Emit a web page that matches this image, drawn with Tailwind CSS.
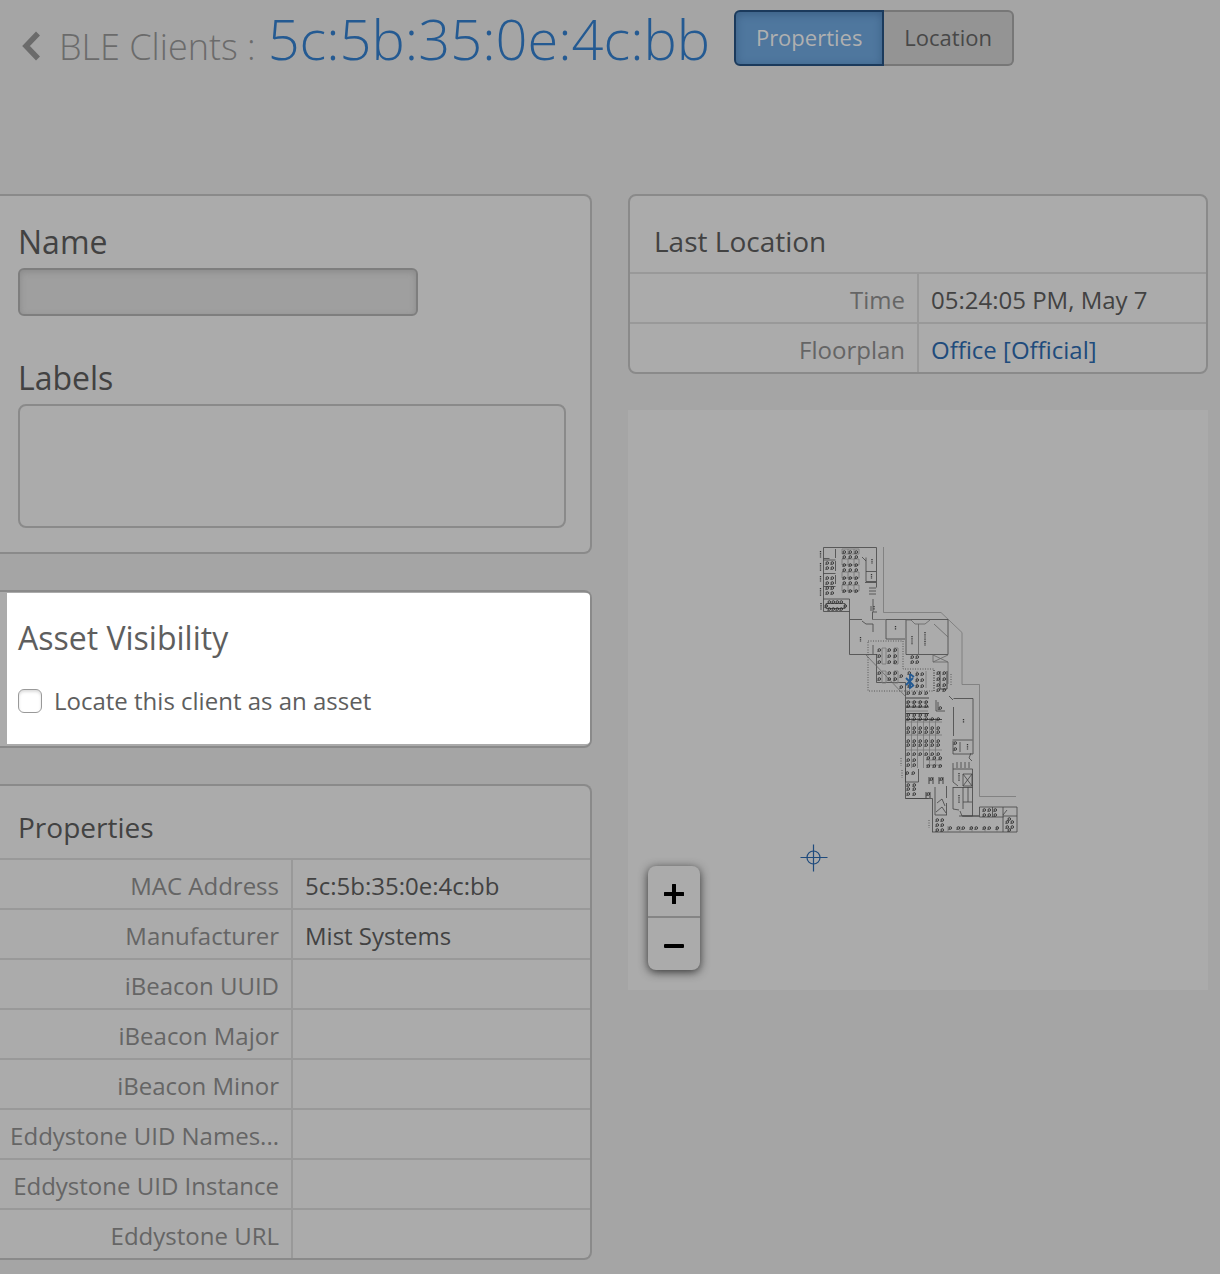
<!DOCTYPE html>
<html lang="en">
<head>
  <meta charset="UTF-8">
  <title>BLE Clients</title>
  <meta name="viewport" content="width=device-width, initial-scale=1.0">
  <script src="https://cdn.jsdelivr.net/npm/@tailwindcss/browser@4"></script>
</head>
<body class="min-h-screen bg-[#a5a5a5] font-['Open_Sans',sans-serif] text-2xl text-[#424242]">

  <header class="flex items-start pl-[22px] pt-[10px] h-[194px]">
    <a href="#" aria-label="Back" class="mt-[21px] mr-[18px]">
      <svg class="w-[19px] h-[30px]" viewBox="0 0 19 30" fill="none" stroke="#6b6b6b" stroke-width="5.5">
        <path d="M16 2.5 4 15l12 12.500"/>
      </svg>
    </a>
    <h1 class="flex items-baseline gap-3 -mt-3 font-light leading-[80px] whitespace-nowrap">
      <span class="text-[36px] text-[#6b6b6b]">BLE Clients :</span>
      <span class="text-[56px] text-[#245a92]">5c:5b:35:0e:4c:bb</span>
    </h1>
    <div class="flex ml-6 text-[22px] h-14">
      <button type="button" class="w-[150px] rounded-l-md border-2 border-[#1b3a5c] bg-[#4f779e] text-[#b0b0b0] shadow-[inset_0_2px_8px_#3b5f84]">Properties</button>
      <button type="button" class="w-[130px] rounded-r-md border-2 border-l-0 border-[#777] bg-[#949494] text-[#484848]">Location</button>
    </div>
  </header>

  <main class="grid grid-cols-[592fr_580fr] items-start gap-9 pr-3 pb-3">

    <div class="flex flex-col gap-9">
      <section class="rounded-r-lg border-2 border-l-0 border-[#8a8a8a] bg-[#ababab] pl-[18px] pr-6 py-6">
        <label for="name" class="block text-[32px] leading-[44px] mb-1">Name</label>
        <input id="name" type="text" class="block w-[400px] h-12 px-3 rounded-md border-2 border-[#7e7e7e] bg-[#9f9f9f] shadow-[inset_0_2px_6px_#8a8a8a]">
        <label for="labels" class="block text-[32px] leading-[44px] mb-1 mt-10">Labels</label>
        <textarea id="labels" class="block w-full h-[124px] px-3 resize-none rounded-lg border-2 border-[#8a8a8a] bg-[#ababab]"></textarea>
      </section>

      <section class="rounded-r-lg border-2 border-l-0 border-[#8a8a8a] bg-[#ababab] pl-[7px] pt-px pb-0.5">
        <div class="h-[151px] rounded-r bg-white pl-[11px] pt-[23px] text-[#5e5e5e]">
          <h2 class="text-[32px] leading-[44px]">Asset Visibility</h2>
          <label class="flex items-center gap-3 mt-[25px] leading-8">
            <input type="checkbox" class="appearance-none w-6 h-6 rounded-md border border-[#999] bg-white shadow-[inset_0_2px_3px_#ddd]">
            Locate this client as an asset
          </label>
        </div>
      </section>

      <section class="rounded-r-lg border-2 border-l-0 border-[#8a8a8a] bg-[#ababab]">
        <h2 class="h-[72px] pl-[18px] pt-[21px] text-[28px] leading-10">Properties</h2>
        <table class="w-full table-fixed border-separate border-spacing-0 leading-8">
          <tbody>
            <tr class="h-[50px]">
              <th scope="row" class="w-[293px] border-t-2 border-r-2 border-[#999] pr-3 pt-1 text-right font-normal text-[#656565] truncate">MAC Address</th>
              <td class="border-t-2 border-[#999] pl-3 pt-1">5c:5b:35:0e:4c:bb</td>
            </tr>
            <tr class="h-[50px]">
              <th scope="row" class="border-t-2 border-r-2 border-[#999] pr-3 pt-1 text-right font-normal text-[#656565] truncate">Manufacturer</th>
              <td class="border-t-2 border-[#999] pl-3 pt-1">Mist Systems</td>
            </tr>
            <tr class="h-[50px]">
              <th scope="row" class="border-t-2 border-r-2 border-[#999] pr-3 pt-1 text-right font-normal text-[#656565] truncate">iBeacon UUID</th>
              <td class="border-t-2 border-[#999] pl-3 pt-1"></td>
            </tr>
            <tr class="h-[50px]">
              <th scope="row" class="border-t-2 border-r-2 border-[#999] pr-3 pt-1 text-right font-normal text-[#656565] truncate">iBeacon Major</th>
              <td class="border-t-2 border-[#999] pl-3 pt-1"></td>
            </tr>
            <tr class="h-[50px]">
              <th scope="row" class="border-t-2 border-r-2 border-[#999] pr-3 pt-1 text-right font-normal text-[#656565] truncate">iBeacon Minor</th>
              <td class="border-t-2 border-[#999] pl-3 pt-1"></td>
            </tr>
            <tr class="h-[50px]">
              <th scope="row" class="border-t-2 border-r-2 border-[#999] pr-3 pt-1 text-right font-normal text-[#656565] truncate">Eddystone UID Names...</th>
              <td class="border-t-2 border-[#999] pl-3 pt-1"></td>
            </tr>
            <tr class="h-[50px]">
              <th scope="row" class="border-t-2 border-r-2 border-[#999] pr-3 pt-1 text-right font-normal text-[#656565] truncate">Eddystone UID Instance</th>
              <td class="border-t-2 border-[#999] pl-3 pt-1"></td>
            </tr>
            <tr class="h-[50px]">
              <th scope="row" class="border-t-2 border-r-2 border-[#999] pr-3 pt-1 text-right font-normal text-[#656565] truncate">Eddystone URL</th>
              <td class="border-t-2 border-[#999] pl-3 pt-1"></td>
            </tr>
          </tbody>
        </table>
      </section>
    </div>

    <div class="flex flex-col gap-9">
      <section class="rounded-lg border-2 border-[#8a8a8a] bg-[#ababab]">
        <h2 class="h-[76px] pl-6 pt-[25px] text-[28px] leading-10">Last Location</h2>
        <table class="w-full table-fixed border-separate border-spacing-0 leading-8">
          <tbody>
            <tr class="h-[50px]">
              <th scope="row" class="w-[289px] border-t-2 border-r-2 border-[#999] pr-3 pt-1 text-right font-normal text-[#656565]">Time</th>
              <td class="border-t-2 border-[#999] pl-3 pt-1">05:24:05 PM, May 7</td>
            </tr>
            <tr class="h-[50px]">
              <th scope="row" class="border-t-2 border-r-2 border-[#999] pr-3 pt-1 text-right font-normal text-[#656565]">Floorplan</th>
              <td class="border-t-2 border-[#999] pl-3 pt-1"><a href="#" class="text-[#204b7c]">Office [Official]</a></td>
            </tr>
          </tbody>
        </table>
      </section>

      <div class="relative bg-[#ababab]">
        <svg class="block w-full" viewBox="628 410 580 580" fill="none" stroke="#444" stroke-width="0.8">
          <!-- outer walls -->
          <path stroke="#777" d="M883.5 547v65.500H941l21 20V684.500h17.500v112H1016"/>
          <path d="M849.500 611.500h-26v-64h53v40M849.500 599v55.500h28M823.500 599h26M886 619.500h62v35M876.500 654v28.500h29v116h23M948 654.500h-42V620M886 620v19h19M862 619.500h-12M862 621l4 3h7v8M873 645v9"/>
          <path stroke="#666" d="M866 655l40 42M934 624l14 13M918.500 624v31M906 620h5l4 4h10l5-4M933 655v7h15v22M933 655l15 7M933 662l15-7M872 619.500h14"/>
          <!-- meeting rooms, top left -->
          <path d="M823.500 558.500h6M823.500 560h12M823.500 573.500h12M823.500 586.500h12M835.500 549v9M835.500 561v10M835.500 575v9M826 603.500h19v5h-19zM866 557.500v24h10M866 571.500h10M862 557l4 4M865 582.500h11M869 588h7M869 591h7M869 594h7M873 599v13h4M871 606v5M872.500 612v7"/>
          <path stroke="#333" stroke-width="1.300" stroke-dasharray="1 0.800" d="M820.500 551v7M820.500 563v8M820.500 576v6M820.500 588v8M821 603v7M872 559v5M871.500 574v5M874 606v4M860.500 637v5M895.500 626v4M912 636v9M925 632v14M963.500 719v4M967.500 744v6M959 773v8M959 795v8"/>
          <!-- lower right rooms -->
          <path d="M953.500 707v29M953.500 698.500h19.500v55.500h-20M972.500 740h-20M953 741v13M960 742v10M953 700l-4-4M953 769h19.500v47h-10M953 769v13l5 4M953 787v22l6 1M953 787.500h19.500M963 774h9v12h-9zM963 774l9 12M972 774l-9 12M963 787v22M963 802h9M968 787v15M953 763v6M957 762v6M961 762v6M965 762v6M969 762v6M971 753l-2 5 3 3M936 700v11h9M938 702v8M960 811l2 5h17M959 816h20"/>
          <path d="M979.500 817v-10h37.500v25h-85M1003 807v25M1003 816h14M1003 815l4-5M979.500 817h24M992.500 807v10M905.500 768v14h13v-13M905.500 798.500h27V832M935 787v28h12M946.500 786v12M946.500 803v12M937 803l5-4 3 7M936 812l6-5 4 6"/>
          <!-- desk rows -->
          <path stroke="#777" d="M842 549h17v5h-17zM842 559h17v6h-17zM842 572h17v6h-17zM842 585h17v6h-17zM848 549v5M854 549v5M848 559v6M854 559v6M848 572v6M854 572v6M848 585v6M854 585v6M882 648h4v16h-4zM894 648h4v16h-4zM882 671h4v12h-4zM894 671h4v12h-4zM917 671v17M926 671v17M906 702h22M906 711h22M906 722h36M906 735h36M906 750h36M911.500 718v50M917.500 718v50M923.500 718v50M929.500 718v50M935.500 718v50M926 760h16M926 765h16M948 826v6M960 826v6M972 826v6M985 826v6M997 826v6"/>
          <path stroke="#444" stroke-width="1" d="M906 698h23M906 707h23M906 713.500h23M906 719.500h36M929 777v7M933 777v7M939 777v7M943 777v7M926 792v6M930 792v6M940 671v18h7v-18"/>
          <path stroke="#444" stroke-dasharray="1 1.500" d="M868 641h35v28h31v22h-66zM934 670v22M901 758v8M902 770v8M929 820v8M951 674v12"/>
          <g id="chairs" stroke="#222" stroke-width="0.8"></g>
          <!-- client beacon -->
          <path stroke="#245a92" stroke-width="1.800" d="M906 678l7 7M906 685l7-7M910 674v14l4-3M910 674l4 3"/>
          <!-- crosshair -->
          <g stroke="#1f4b7d" stroke-width="1.200">
            <circle cx="813.500" cy="857.500" r="6.500"/>
            <path d="M813.500 844.500v27M800.500 857.500h27"/>
          </g>
        </svg>
        <div class="absolute left-5 bottom-5 flex w-[52px] flex-col rounded-lg bg-[#ababab] shadow-[0_2px_10px_#333]">
          <button type="button" aria-label="Zoom in" class="flex h-[52px] items-center justify-center border-b-2 border-[#858585] pt-1.5">
            <svg class="w-[22px] h-[22px]" viewBox="0 0 22 22"><path d="M9 1.500q0-.5.5-.5h3q.5 0 .5.5V9h7.500q.5 0 .5.5v3q0 .5-.5.5H13v7.500q0 .5-.5.5h-3q-.5 0-.5-.5V13H1.500q-.5 0-.5-.5v-3q0-.5.5-.5H9z"/></svg>
          </button>
          <button type="button" aria-label="Zoom out" class="flex h-[52px] items-center justify-center pt-1">
            <svg class="w-[22px] h-[22px]" viewBox="0 0 22 22"><rect x="1" y="9" width="20" height="4" rx="1"/></svg>
          </button>
        </div>
      </div>
    </div>
  </main>

  <script>
    // Chair blocks on the floorplan: x positions, y positions
    const blocks = [
      [[844, 850, 856], [552, 557, 565, 570, 578, 583, 591]],
      [[827, 832], [563, 568, 578, 583, 588, 593]],
      [[829, 833, 837, 841], [602, 609]],
      [[826, 845], [606]],
      [[879, 889, 895], [650, 656, 662, 673, 679]],
      [[901], [676, 687]],
      [[909], [673, 686]],
      [[917, 922], [674, 680, 686]],
      [[912, 917], [657, 662]],
      [[938, 944], [673, 679, 685, 690]],
      [[908, 914, 920, 926], [693, 702, 706, 715]],
      [[908, 914, 920, 926, 932, 938], [719, 728, 732, 741, 745, 754]],
      [[928, 934, 940], [758, 766]],
      [[908, 914], [760, 765, 785, 789, 794]],
      [[907, 913], [773]],
      [[931, 941], [779]],
      [[928], [794]],
      [[937, 942], [820, 825, 830]],
      [[984, 989, 995], [810, 815]],
      [[950, 958, 963, 971, 976, 984, 989, 997], [828]],
      [[1007, 1012], [822, 827]],
      [[1009], [819, 830]],
      [[955], [743, 749]],
      [[940], [708]]
    ];

    let d = '';
    for (const [xs, ys] of blocks) {
      for (const x of xs) {
        for (const y of ys) {
          d += `M${x - 1} ${y}a1.300 1.300 0 1 0 2.600 0a1.300 1.300 0 1 0 -2.600 0M${x - 1.500} ${y + 1.500}h1`;
        }
      }
    }
    const path = document.createElementNS('http://www.w3.org/2000/svg', 'path');
    path.setAttribute('d', d);
    document.getElementById('chairs').appendChild(path);
  </script>

</body>
</html>
